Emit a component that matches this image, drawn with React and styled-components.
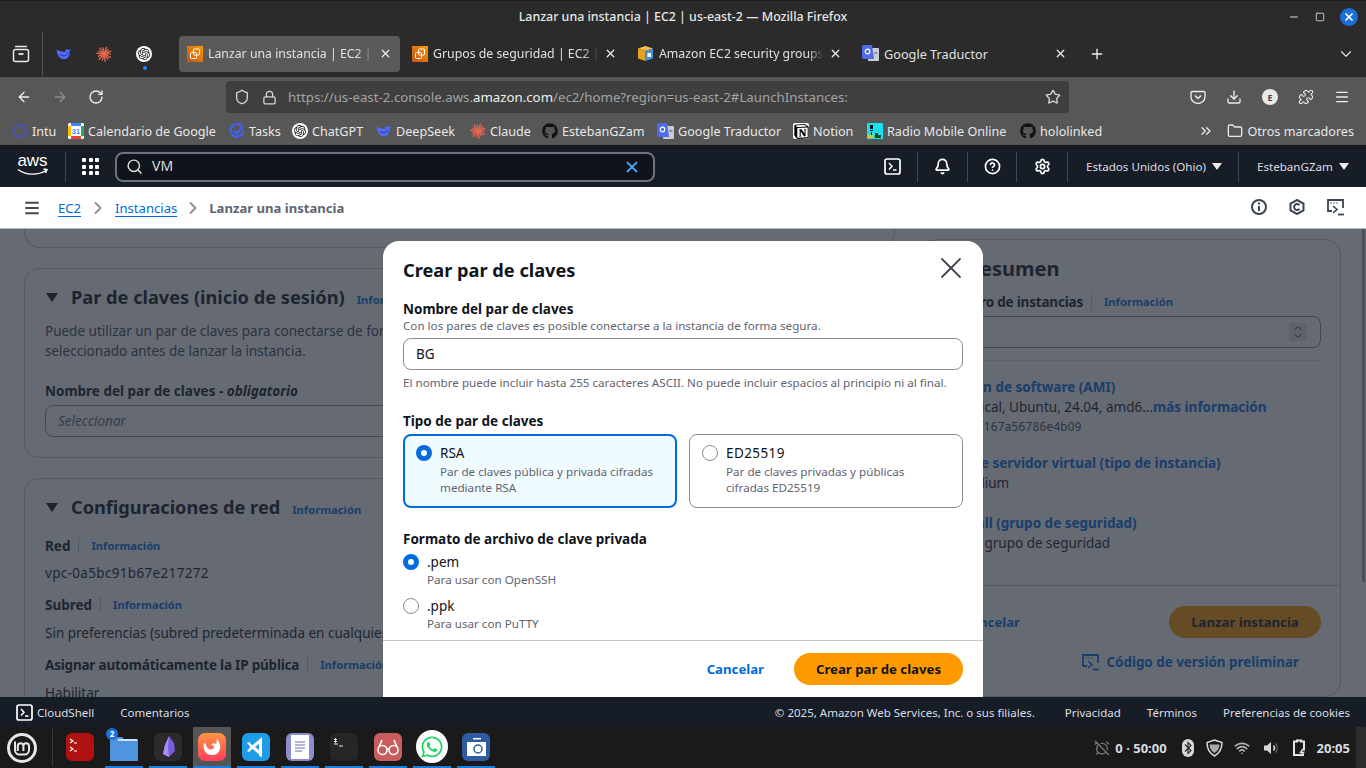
import React from "react";
import styled, { createGlobalStyle } from "styled-components";
import {
  ArrowLeft, ArrowRight, RotateCw, Shield, Lock, Star, Download, Puzzle, Menu, X, Plus,
  ChevronDown, ChevronRight, ChevronsRight, Bell, CircleHelp, Settings, Search, Folder,
  Minus, Square, Wifi, AlarmClockOff, ChevronUp,
} from "lucide-react";
import { SiOpenai, SiNotion } from "react-icons/si";
import { FaGithub, FaWhatsapp } from "react-icons/fa";

const chromeFont = `"Noto Sans", "Liberation Sans", sans-serif`;
const pageFont = `"Noto Sans", "Open Sans", sans-serif`;

const Global = createGlobalStyle`
  html, body { margin: 0; padding: 0; height: 100%; overflow: hidden; background: #1a1a1a; }
  * { box-sizing: border-box; }
`;

const Screen = styled.div`
  width: 1366px;
  height: 768px;
  display: flex;
  flex-direction: column;
  overflow: hidden;
  font-family: ${pageFont};
`;

/* ---------- window + firefox chrome ---------- */

const TitleBar = styled.div`
  height: 32px;
  flex: none;
  background: #2b2b2b;
  border-top: 1px solid #1f1f1f;
  color: #e6e6e6;
  font: 500 12.4px ${chromeFont};
  display: grid;
  grid-template-columns: 1fr auto 1fr;
  align-items: center;
  padding: 0 8px;
`;

const TitleText = styled.div`
  grid-column: 2;
`;

const WindowButtons = styled.div`
  grid-column: 3;
  display: flex;
  justify-content: flex-end;
  align-items: center;
  gap: 15px;
  color: #ddd;
`;

const CloseDot = styled.div`
  width: 18px;
  height: 18px;
  border-radius: 50%;
  background: #1a6fd8;
  color: #fff;
  display: flex;
  align-items: center;
  justify-content: center;
`;

const TabBar = styled.div`
  height: 45px;
  flex: none;
  background: #2b2b2b;
  padding-bottom: 2px;
  display: flex;
  align-items: center;
  color: #ddd;
`;

const ContainerSlot = styled.div`
  width: 43px;
  height: 44px;
  border-right: 1px solid #555;
  display: flex;
  align-items: center;
  justify-content: center;
`;

const PinnedTab = styled.div`
  width: 40px;
  display: flex;
  justify-content: center;
  position: relative;
`;

const PinnedDot = styled.span`
  position: absolute;
  bottom: -8px;
  left: 19px;
  width: 4px;
  height: 4px;
  border-radius: 50%;
  background: #2a7fff;
`;

const PinnedRow = styled.div`
  display: flex;
  margin-left: 1px;
  width: 135px;
`;

const Tab = styled.div`
  width: 221px;
  height: 36px;
  margin-right: 4px;
  padding: 0 8px;
  border-radius: 4px;
  background: ${(p) => (p.$active ? "#5a5a5a" : "transparent")};
  display: flex;
  align-items: center;
  gap: 5px;
  font: 12.7px ${chromeFont};
  color: #e0e0e0;
`;

const TabLabel = styled.div`
  flex: 1;
  min-width: 0;
  white-space: nowrap;
  overflow: hidden;
  font-size: ${(p) => (p.$fade ? "12.3px" : "12.7px")};
  -webkit-mask-image: ${(p) => (p.$fade ? "linear-gradient(90deg, #000 90%, transparent)" : "none")};
`;

const TabEnd = styled.div`
  margin-left: auto;
  padding-right: 11px;
  display: flex;
  align-items: center;
`;

const NavBar = styled.div`
  height: 38px;
  flex: none;
  background: #575757;
  padding-top: 2px;
  display: flex;
  align-items: center;
  color: #eee;
`;

const NavButtons = styled.div`
  width: 226px;
  padding-left: 16px;
  display: flex;
  gap: 20px;
`;

const UrlBar = styled.div`
  width: 843px;
  height: 32px;
  background: #3f3f3f;
  border-radius: 4px;
  display: flex;
  align-items: center;
  padding: 0 8px;
  color: #d5d5d5;
`;

const UrlText = styled.div`
  flex: 1;
  margin-left: 11px;
  font: 13.25px ${chromeFont};
  color: #a3a3a3;
  white-space: nowrap;
  overflow: hidden;
  b { font-weight: 400; color: #f0f0f0; }
`;

const NavRight = styled.div`
  flex: 1;
  display: flex;
  justify-content: space-between;
  align-items: center;
  padding: 0 16px 0 121px;
`;

const ProfileDot = styled.div`
  width: 16px;
  height: 16px;
  border-radius: 50%;
  background: #e8e8e8;
  color: #444;
  font: 700 9px ${chromeFont};
  display: flex;
  align-items: center;
  justify-content: center;
`;

const BookmarkBar = styled.div`
  height: 30px;
  flex: none;
  background: #575757;
  padding: 2px 0 0 12px;
  display: flex;
  align-items: center;
  font: 12.6px ${chromeFont};
  color: #e8e8e8;
`;

const Bookmark = styled.div`
  width: ${(p) => p.$w}px;
  flex: none;
  display: flex;
  align-items: center;
  gap: 4px;
  white-space: nowrap;
`;

const BookmarkEnd = styled.div`
  margin-left: auto;
  padding-right: 12px;
  display: flex;
  align-items: center;
  gap: 4px;
`;

/* ---------- aws console ---------- */

const AwsHeader = styled.div`
  height: 42px;
  flex: none;
  background: #161d26;
  border-top: 1px solid #0f141a;
  display: flex;
  align-items: center;
  color: #eee;
  font: 11.6px ${pageFont};
`;

const AwsLogo = styled.div`
  margin-left: 16px;
  padding-right: 16px;
  height: 30px;
  display: flex;
  flex-direction: column;
  align-items: center;
  border-right: 1px solid #424650;
  box-sizing: content-box;
  width: 33px;
  font: 17px/17px "Liberation Sans", sans-serif;
  color: #fff;
  svg { margin-top: -1px; }
`;

const AppsGrid = styled.div`
  margin-left: 16px;
  width: 17px;
  display: grid;
  grid-template-columns: repeat(3, 4px);
  gap: 2.5px;
  span { width: 4px; height: 4px; background: #fff; border-radius: 1px; }
`;

const SearchBox = styled.div`
  width: 540px;
  height: 30px;
  margin-left: 16px;
  background: #0f141a;
  border: 2px solid #6e737b;
  border-radius: 8px;
  display: flex;
  align-items: center;
  padding: 0 12px 0 9px;
  color: #ddd;
  font: 14px ${pageFont};
`;

const SearchValue = styled.div`
  flex: 1;
  margin: 0 0 2px 9px;
`;

const HeaderRight = styled.div`
  margin-left: auto;
  display: flex;
  align-items: center;
`;

const HeaderCell = styled.div`
  width: ${(p) => p.$w}px;
  height: 30px;
  border-right: ${(p) => (p.$last ? "none" : "1px solid #424650")};
  display: flex;
  align-items: center;
  justify-content: ${(p) => (p.$start ? "flex-start" : "center")};
  padding-left: ${(p) => (p.$start ? "18px" : "0")};
  gap: 6px;
  white-space: nowrap;
  color: #dedee3;
`;

const Caret = styled.span`
  width: 0;
  height: 0;
  border-left: 5px solid transparent;
  border-right: 5px solid transparent;
  border-top: 7px solid ${(p) => p.$color || "#eee"};
  flex: none;
`;

const Breadcrumbs = styled.div`
  height: 42px;
  flex: none;
  background: #fff;
  border-bottom: 1px solid #b4b4bb;
  display: flex;
  align-items: center;
  padding: 0 22px 0 23px;
  font: 13.1px ${pageFont};
  color: #8c8c94;
`;

const CrumbLink = styled.a`
  color: #006ce0;
  text-decoration: underline;
  text-underline-offset: 3px;
`;

const CrumbCurrent = styled.span`
  color: #5f6470;
  font-weight: 700;
`;

const CrumbChevron = styled(ChevronRight)`
  margin: 0 ${(p) => p.$gap}px;
`;

const CrumbActions = styled.div`
  margin-left: auto;
  display: flex;
  gap: 22px;
  color: #3b4450;
`;

const Content = styled.div`
  position: relative;
  height: 468px;
  flex: none;
  background: #fff;
  overflow: hidden;
`;

const Columns = styled.div`
  display: grid;
  grid-template-columns: 871px 420px;
  gap: 26px;
  padding-left: 24px;
  color: #0f141a;
`;

const LeftColumn = styled.div`
  display: flex;
  flex-direction: column;
  gap: 20px;
`;

const Card = styled.section`
  border: 1px solid #c6c6cd;
  border-radius: 16px;
  padding: 16px 20px ${(p) => p.$pb || 19}px;
`;

const StubCard = styled.div`
  height: 19px;
  border: 1px solid #c6c6cd;
  border-top: none;
  border-radius: 0 0 16px 16px;
`;

const CardHead = styled.div`
  display: flex;
  align-items: center;
  height: 24px;
  font: 700 18.2px/24px ${pageFont};
`;

const Triangle = styled.span`
  width: 0;
  height: 0;
  margin-left: 1px;
  margin-right: 13px;
  border-left: 6px solid transparent;
  border-right: 6px solid transparent;
  border-top: 9px solid #0f141a;
`;

const InfoLink = styled.span`
  font: 700 11.2px/20px ${pageFont};
  color: #006ce0;
  margin-left: ${(p) => p.$gap || 12}px;
`;

const HeadInfo = styled(InfoLink)`
  margin-top: 6px;
`;

const Body = styled.div`
  font: 13.5px/20px ${pageFont};
  margin-top: ${(p) => p.$mt || 0}px;
  white-space: nowrap;
  color: ${(p) => p.$color || "#0f141a"};
`;

const IdLine = styled(Body)`
  letter-spacing: 0.33px;
`;

const Label = styled.div`
  font: 700 13.5px/20px ${pageFont};
  margin-top: ${(p) => p.$mt || 0}px;
  white-space: nowrap;
  display: flex;
  align-items: center;
`;

const ModalLabel = styled(Label)`
  line-height: 22px;
  margin-bottom: -2px;
`;

const TightLabel = styled(Label)`
  letter-spacing: -0.2px;
`;

const InfoSplit = styled.span`
  border-left: 1px solid #c6c6cd;
  margin-left: 8px;
  padding-left: 11px;
  height: 16px;
  display: flex;
  align-items: center;
  letter-spacing: 0;
`;

const FieldBox = styled.div`
  height: 32px;
  margin-top: 4px;
  border: 1px solid #8c8c94;
  border-radius: 8px;
  padding: 0 12px;
  font: italic 13.5px/30px ${pageFont};
  color: #656871;
  display: flex;
  align-items: center;
  justify-content: flex-end;
`;

const SelectText = styled.span`
  margin-right: auto;
`;

const Spinner = styled.div`
  width: 18px;
  height: 18px;
  margin-right: 1px;
  background: #e3e3e8;
  color: #3d4450;
  display: flex;
  flex-direction: column;
  align-items: center;
  justify-content: center;
  svg { margin: -2px 0; }
`;

const SummaryCard = styled.aside`
  margin-top: 10px;
  height: 458px;
  border: 1px solid #c6c6cd;
  border-radius: 16px;
  display: flex;
  flex-direction: column;
`;

const SummaryScroll = styled.div`
  height: 341px;
  padding: 17px 19px 0 18px;
  overflow: hidden;
`;

const SummaryHead = styled.div`
  font: 700 20px/24px ${pageFont};
  padding-left: 27px;
`;

const Divider = styled.div`
  height: 1px;
  background: #e3e3e8;
  margin-top: 12px;
`;

const SummaryLink = styled.div`
  font: 700 13.5px/20px ${pageFont};
  color: #006ce0;
  margin-top: ${(p) => p.$mt || 0}px;
  white-space: nowrap;
`;

const MoreLink = styled.span`
  font-weight: 700;
  color: #006ce0;
`;

const SmallGrey = styled.div`
  font: 11.7px/16px ${pageFont};
  letter-spacing: 0.3px;
  margin-top: 1px;
  color: #424650;
`;

const SummaryFoot = styled.div`
  margin-top: 4px;
  border-top: 1px solid #c6c6cd;
  padding: 20px 19px 0;
`;

const FootActions = styled.div`
  display: flex;
  align-items: center;
  justify-content: flex-end;
  gap: 149px;
`;

const TextLink = styled.span`
  font: 700 13.2px/20px ${pageFont};
  color: #006ce0;
`;

const PrimaryButton = styled.button`
  height: 32px;
  width: ${(p) => p.$w}px;
  border: none;
  border-radius: 16px;
  background: #ff9900;
  color: #0f141a;
  font: 700 13.2px ${pageFont};
  padding: 0;
`;

const PreviewCode = styled.div`
  margin-top: 14px;
  padding-right: 22px;
  display: flex;
  justify-content: flex-end;
  align-items: center;
  gap: 7px;
  color: #006ce0;
  font: 700 13.4px/20px ${pageFont};
`;

const ScrollThumb = styled.div`
  position: absolute;
  top: 0;
  right: 1px;
  width: 3px;
  height: 353px;
  background: #a8a8ac;
  z-index: 2;
`;

/* ---------- modal ---------- */

const Overlay = styled.div`
  position: absolute;
  inset: 0;
  background: rgba(35, 43, 55, 0.7);
  display: flex;
  justify-content: center;
  padding-top: 12px;
  z-index: 3;
`;

const Modal = styled.div`
  width: 600px;
  height: 490px;
  flex: none;
  background: #fff;
  border-radius: 16px;
  color: #0f141a;
`;

const ModalScroll = styled.div`
  height: 400px;
  padding: 15px 20px 0;
  overflow: hidden;
  border-bottom: 1px solid #c6c6cd;
`;

const ModalHead = styled.div`
  height: 28px;
  display: flex;
  justify-content: space-between;
  align-items: center;
  font: 700 18.2px/28px ${pageFont};
  color: #0f141a;
  svg { margin: -8px -6px -4px 0; flex: none; }
`;

const Hint = styled.div`
  font: 11.65px/16px ${pageFont};
  color: #5f6470;
  white-space: nowrap;
  margin-top: ${(p) => p.$mt || 0}px;
`;

const TextInput = styled.div`
  height: 32px;
  margin-top: 4px;
  border: 1px solid #8c8c94;
  border-radius: 8px;
  padding: 0 12px;
  font: 13.5px/30px ${pageFont};
  color: #0f141a;
`;

const TileRow = styled.div`
  display: grid;
  grid-template-columns: 1fr 1fr;
  gap: 12px;
  margin-top: 4px;
`;

const Tile = styled.div`
  height: 74px;
  border-radius: 8px;
  border: ${(p) => (p.$on ? "2px solid #006ce0" : "1px solid #8c8c94")};
  background: ${(p) => (p.$on ? "#f0fbff" : "#fff")};
  padding: ${(p) => (p.$on ? "7px 11px" : "8px 12px")};
`;

const RadioRow = styled.div`
  display: flex;
  gap: 8px;
  margin-top: ${(p) => p.$mt || 0}px;
`;

const RadioDot = styled.span`
  width: 16px;
  height: 16px;
  margin-top: 2px;
  flex: none;
  border-radius: 50%;
  background: #fff;
  border: ${(p) => (p.$on ? "5px solid #006ce0" : "1px solid #8c8c94")};
`;

const RadioTitle = styled.div`
  font: 13.5px/20px ${pageFont};
  letter-spacing: ${(p) => (p.$spaced ? "0.4px" : "0")};
`;

const ModalFoot = styled.div`
  display: flex;
  justify-content: flex-end;
  align-items: center;
  gap: 30px;
  padding: 12px 20px;
`;

/* ---------- footers ---------- */

const ConsoleFoot = styled.div`
  height: 30px;
  flex: none;
  background: #161d26;
  color: #dedee3;
  font: 11.5px ${pageFont};
  display: flex;
  align-items: center;
  padding: 1px 16px 0;
`;

const FootItem = styled.span`
  display: flex;
  align-items: center;
  gap: 4px;
  margin-left: ${(p) => (p.$auto ? "auto" : `${p.$ml || 0}px`)};
  white-space: nowrap;
`;

const Taskbar = styled.div`
  height: 41px;
  flex: none;
  background: #1a1a1a;
  display: flex;
  align-items: stretch;
  color: #ddd;
`;

const MintSlot = styled.div`
  width: 52px;
  padding-right: 8px;
  display: flex;
  align-items: center;
  justify-content: center;
`;

const MintSplit = styled.div`
  width: 1px;
  background: #3a3a3a;
  margin: 2px 8px 2px 0;
`;

const Launchers = styled.div`
  display: flex;
  gap: 6px;
`;

const Launcher = styled.div`
  position: relative;
  width: 38px;
  display: flex;
  align-items: center;
  justify-content: center;
  background: ${(p) => (p.$active ? "#555" : "transparent")};
  border-bottom: 2px solid ${(p) => (p.$open ? "#1a7ee0" : "transparent")};
`;

const Badge = styled.span`
  position: absolute;
  top: 1px;
  left: 1px;
  width: 12px;
  height: 12px;
  border-radius: 50%;
  background: #1a6fd8;
  color: #fff;
  font: 700 8px/12px ${chromeFont};
  text-align: center;
`;

const Tray = styled.div`
  margin-left: auto;
  display: flex;
  align-items: center;
  font: 700 13px ${chromeFont};
  color: #d8dde4;
`;

const TrayItem = styled.div`
  display: flex;
  align-items: center;
  gap: 5px;
  margin-left: ${(p) => p.$ml || 0}px;
`;

const DesktopEdge = styled.div`
  width: 10px;
  height: 41px;
  margin-left: 6px;
  background: #2c2c2c;
`;

const GptBadge = styled.span`
  width: ${(p) => p.$size}px;
  height: ${(p) => p.$size}px;
  border-radius: 50%;
  background: #fff;
  color: #111;
  flex: none;
  display: flex;
  align-items: center;
  justify-content: center;
`;

const NotionBadge = styled.span`
  width: 16px;
  height: 16px;
  background: #fff;
  border-radius: 2px;
  color: #000;
  flex: none;
  display: flex;
  align-items: center;
  justify-content: center;
`;

const WhatsappBadge = styled.span`
  width: 32px;
  height: 33px;
  border-radius: 50%;
  background: #fff;
  color: #25d366;
  display: flex;
  align-items: center;
  justify-content: center;
`;

/* ---------- drawn icons ---------- */

const ContainerIcon = () => (
  <svg width="18" height="18" viewBox="0 0 18 18" fill="none" stroke="#e8e8e8" strokeWidth="1.500">
    <path d="M3 1.500h12M1.500 6.500a2 2 0 0 1 2-2h11a2 2 0 0 1 2 2v8a2 2 0 0 1-2 2h-11a2 2 0 0 1-2-2Z" />
    <path d="M6.500 9h5" strokeWidth="1.800" />
  </svg>
);

const Ec2Icon = () => (
  <svg width="16" height="16" viewBox="0 0 16 16">
    <defs>
      <linearGradient id="ec2" x1="0" y1="1" x2="1" y2="0">
        <stop offset="0" stopColor="#c8511b" />
        <stop offset="1" stopColor="#ff9900" />
      </linearGradient>
    </defs>
    <rect width="16" height="16" fill="url(#ec2)" />
    <rect x="6.500" y="3" width="6" height="6" rx="1" fill="none" stroke="#fff" />
    <rect x="3.500" y="6.500" width="6" height="6" rx="1" fill="none" stroke="#fff" />
  </svg>
);

const BoxIcon = () => (
  <svg width="17" height="17" viewBox="0 0 17 17">
    <path d="M8.500 1 16 3.500 8.500 6 1 3.500Z" fill="#f7c04a" />
    <path d="M1 3.500 8.500 6v10L1 13.500Z" fill="#e8a021" />
    <path d="M16 3.500 8.500 6v10l7.500-2.500Z" fill="#4a90d9" />
    <path d="M10.500 8h3.500v4h-3.500z" fill="#fff" />
  </svg>
);

const TranslateIcon = () => (
  <svg width="17" height="17" viewBox="0 0 17 17">
    <rect x="6" y="3" width="11" height="13" rx="1" fill="#c9ccd6" />
    <path d="M1.500 0H10l2 14H1.500A1.500 1.500 0 0 1 0 12.500V1.500A1.500 1.500 0 0 1 1.500 0Z" fill="#4f6be8" />
    <circle cx="5.500" cy="6.500" r="2.300" fill="none" stroke="#fff" strokeWidth="1.200" />
    <path d="M12 8h3.500M13.700 7v1.500" stroke="#6a7080" strokeWidth="1" />
  </svg>
);

const WhaleIcon = () => (
  <svg width="16" height="16" viewBox="0 0 16 16">
    <path
      d="M.5 4.500c.6 3.200 1.800 6.300 4.200 7.800 2.500 1.500 5.700 1 7.200-.8.700-.9 1-1.700 1.100-2.700.6-.1 1.200-.4 1.700-.9-.7.1-1.300 0-1.500-.4-.2-1 .2-2 1-2.800.4-.5.700-1 .8-1.700-.7.500-1.500.9-2.400 1-.8-.8-2-.9-2.800-.2-.6.5-.9 1.300-.7 2.100-2 .1-4.500-.6-8.600-1.900Z"
      fill="#4d6bfe"
    />
    <path d="M4 8.500c1.800 1.300 3.700 1.600 5.800.8 1.100-.5 1.700-1.400 1.900-2.300" fill="none" stroke="#2b2b2b" strokeWidth=".7" />
  </svg>
);

const ClaudeIcon = () => {
  const rays = [0, 27, 52, 80, 105, 133, 158, 185, 208, 235, 262, 290, 315, 338];
  return (
    <svg width="16" height="16" viewBox="-8 -8 16 16">
      <circle r="2.600" fill="#e0664f" />
      {rays.map((a, i) => (
        <line
          key={a}
          x1="0"
          y1="0"
          x2={(i % 2 ? 7.8 : 6.6) * Math.cos((a * Math.PI) / 180)}
          y2={(i % 2 ? 7.8 : 6.6) * Math.sin((a * Math.PI) / 180)}
          stroke="#e0664f"
          strokeWidth="1.400"
        />
      ))}
    </svg>
  );
};

const GptIcon = ({ size = 16 }) => (
  <GptBadge $size={size}><SiOpenai size={size - 4} /></GptBadge>
);

const IntuIcon = () => (
  <svg width="16" height="16" viewBox="0 0 16 16">
    <circle cx="8" cy="8" r="6.200" fill="none" stroke="#4a55c8" strokeWidth="3" strokeDasharray="1 .8" />
  </svg>
);

const CalendarIcon = () => (
  <svg width="16" height="16" viewBox="0 0 16 16">
    <rect width="16" height="16" rx="1.500" fill="#fff" />
    <path d="M0 3h3v10H0z" fill="#fbbc04" />
    <path d="M3 0h10v3H3z" fill="#4285f4" />
    <path d="M13 3h3v10h-3z" fill="#34a853" />
    <path d="M3 13h10v3H3z" fill="#ea4335" />
    <text x="8" y="11" textAnchor="middle" fontSize="7.500" fontWeight="700" fontFamily="Liberation Sans" fill="#4285f4">31</text>
  </svg>
);

const TasksIcon = () => (
  <svg width="16" height="16" viewBox="0 0 16 16" fill="none">
    <path d="M13 3a6.500 6.500 0 1 0 1.500 5" stroke="#3f63e8" strokeWidth="2.400" />
    <path d="m5 8 2.500 2.500L14 3.500" stroke="#3f63e8" strokeWidth="2.400" />
  </svg>
);

const RadioIcon = () => (
  <svg width="16" height="16" viewBox="0 0 16 16">
    <rect width="16" height="16" fill="#19e0ee" />
    <path d="M3 2h3v4H3zM3 7h3v1H3zM4 9h1v3H4z" fill="#101010" />
    <path d="M1 12h5v3H1z" fill="#d6c91a" />
    <path d="M8 10h3v2h3v3H8z" fill="#134d1a" />
  </svg>
);

const NotionIcon = () => (
  <NotionBadge><SiNotion size={15} /></NotionBadge>
);

const PocketIcon = () => (
  <svg width="16" height="16" viewBox="0 0 16 16" fill="none" stroke="#eee" strokeWidth="1.300">
    <path d="M2 2.500h12a1 1 0 0 1 1 1V8a7 6.500 0 0 1-14 0V3.500a1 1 0 0 1 1-1Z" />
    <path d="m5 6.500 3 3 3-3" strokeWidth="1.500" />
  </svg>
);

const ShellIcon = ({ color = "#fff" }) => (
  <svg width="17" height="17" viewBox="0 0 17 17" fill="none" stroke={color} strokeWidth="1.700">
    <rect x="1" y="1" width="15" height="15" rx="2" />
    <path d="m5 5 3 3.200-3 3.200M9 12h3.500" strokeWidth="1.500" />
  </svg>
);

const RoundInfo = () => (
  <svg width="16" height="16" viewBox="0 0 16 16" fill="none" stroke="currentColor" strokeWidth="2">
    <circle cx="8" cy="8" r="7" />
    <path d="M8 7v5M8 3.500v2" />
  </svg>
);

const HexIcon = () => (
  <svg width="16" height="16" viewBox="0 0 16 16" fill="none" stroke="currentColor" strokeWidth="2">
    <path d="M8 1 14.500 4.500v7L8 15l-6.500-3.500v-7Z" />
    <path d="M10.500 6.200a3 3 0 1 0 0 3.600" />
  </svg>
);

const CodeScreen = ({ size = 17 }) => (
  <svg width={size} height={size} viewBox="0 0 17 17" fill="none" stroke="currentColor" strokeWidth="1.800">
    <path d="M5 12H1V1h15v8" />
    <path d="m6 7 4 3.500L6 14" strokeWidth="1.600" />
    <path d="M11 15.500h6" strokeWidth="1.800" />
    <path d="M3.500 4h1M6.500 4h1M9.500 4h1" strokeWidth="1.600" />
  </svg>
);

const MintLogo = () => (
  <svg width="32" height="32" viewBox="0 0 32 32" fill="none" stroke="#e6e6e6">
    <circle cx="16" cy="16" r="13.500" strokeWidth="3" />
    <path d="M9 9.500V18a4.500 4.500 0 0 0 4.500 4.500h5A4.500 4.500 0 0 0 23 18v-4a2.800 2.800 0 0 0-5.600 0v5M17.400 14a2.800 2.800 0 0 0-5.600 0v5" strokeWidth="2" />
  </svg>
);

const AppTile = ({ bg, children, radius = 6 }) => (
  <svg width="30" height="32" viewBox="0 0 30 32">
    <rect x="1" y="2" width="28" height="28" rx={radius} fill={bg} />
    {children}
  </svg>
);

const RedTerm = () => (
  <AppTile bg="#b01212">
    <path d="M5 8l3 2-3 2M9 12h3M5 16l3 2-3 2M9 20h3" stroke="#fff" strokeWidth="1.200" fill="none" />
  </AppTile>
);

const FilesIcon = () => (
  <svg width="30" height="32" viewBox="0 0 30 32">
    <path d="M1 6h12l2 2h14v22H1Z" fill="#4f94e0" />
    <path d="M9 8h19v2H9z" fill="#cfe2f7" />
  </svg>
);

const ObsidianIcon = () => (
  <AppTile bg="#2b2b2b">
    <path d="M16 5l5 7 1 8-6 6-6-3 2-9Z" fill="#7a5ce0" />
    <path d="M16 5l-1 11 1 10-6-3 2-9Z" fill="#a98cf2" />
  </AppTile>
);

const FirefoxDevIcon = () => (
  <svg width="30" height="32" viewBox="0 0 30 32">
    <defs>
      <linearGradient id="ff" x1="0" y1="0" x2="0" y2="1">
        <stop offset="0" stopColor="#ff9640" />
        <stop offset="1" stopColor="#ff3d5c" />
      </linearGradient>
    </defs>
    <rect x="1" y="2" width="28" height="28" rx="7" fill="url(#ff)" />
    <path d="M7 12c-2 7 3 13 9 12 5 0 8-5 7-10-.5-3-2-5-4-6 1 2 1 4 0 5-1-1-4-1-5 1 1 0 3 0 3 2s-3 3-5 2c-2-1-3-3-3-5 0-.5-1 0-2-1Z" fill="#fff" />
  </svg>
);

const VscodeIcon = () => (
  <AppTile bg="#1f9ce8">
    <path d="M21 6v20l-3-1V9Z" fill="#fff" />
    <path d="M19 8 9 16l10 8v-4l-5-4 5-4Z" fill="#fff" />
    <path d="m6 12 2-1 5 5-5 5-2-1 3.500-4Z" fill="#fff" />
  </AppTile>
);

const NotesIcon = () => (
  <AppTile bg="#8c8ccc">
    <rect x="6" y="4" width="18" height="24" fill="#fff" />
    <path d="M10 11h10M10 14h10M10 17h10M10 20h7" stroke="#6a6ab0" strokeWidth="1" />
  </AppTile>
);

const TermIcon = () => (
  <AppTile bg="#262626">
    <path d="M5 13h4M10 15h4" stroke="#eee" strokeWidth="1.200" />
    <path d="M6.500 7v5M5 8.500h3M5 10.500h3" stroke="#eee" strokeWidth=".900" />
  </AppTile>
);

const GlassesIcon = () => (
  <AppTile bg="#c95c5c">
    <g fill="none" stroke="#fff" strokeWidth="1.600">
      <circle cx="9.500" cy="19" r="4.500" />
      <circle cx="20.500" cy="19" r="4.500" />
      <path d="M14 18h2M6 16l3-7M24 16l-3-7" />
    </g>
  </AppTile>
);

const WhatsappIcon = () => (
  <WhatsappBadge><FaWhatsapp size={24} /></WhatsappBadge>
);

const CameraIcon = () => (
  <AppTile bg="#2f5c9e">
    <rect x="6" y="11" width="19" height="14" fill="#fff" />
    <path d="M12 7h8v1.500h-8z" fill="#fff" />
    <circle cx="17" cy="18" r="4" fill="#fff" stroke="#2f5c9e" strokeWidth="1.500" />
  </AppTile>
);

const BluetoothBadge = () => (
  <svg width="12" height="18" viewBox="0 0 12 18">
    <rect width="12" height="18" rx="6" fill="#d8d8d8" />
    <path d="M3 5.500 9 11.500 6 14.500V3.500L9 6.500 3 12.500" fill="none" stroke="#222" strokeWidth="1.100" />
  </svg>
);

const TrayShield = () => (
  <svg width="17" height="18" viewBox="0 0 17 18" fill="none" stroke="#d8d8d8">
    <path d="M8.500 1 16 3.500c0 6-2 10.500-7.500 13.500C3 14 1 9.500 1 3.500Z" strokeWidth="1.500" />
    <path d="M3.500 5.500h10c0 3.500-1.500 6.500-5 8.500-3.500-2-5-5-5-8.500Z" fill="#d8d8d8" stroke="none" opacity=".75" />
  </svg>
);

const SpeakerIcon = () => (
  <svg width="16" height="16" viewBox="0 0 16 16" fill="none">
    <path d="M1 5.500h3L8 2v12l-4-3.500H1Z" fill="#d8d8d8" />
    <path d="M10.500 5.500a4 4 0 0 1 0 5" stroke="#d8d8d8" strokeWidth="1.500" />
    <path d="M12.500 3.500a7 7 0 0 1 0 9" stroke="#666" strokeWidth="1.300" />
  </svg>
);

const BatteryIcon = () => (
  <svg width="14" height="18" viewBox="0 0 14 18" fill="none" stroke="#e4e4e4" strokeWidth="2">
    <path d="M5 2.500V1.500h4v1h3v9M12 16H2V2.500h4" />
    <path d="m11 10-2.500 3.500h3L9 17" strokeWidth="1.400" />
  </svg>
);

/* ---------- data ---------- */

const tabs = [
  { icon: <Ec2Icon />, label: "Lanzar una instancia | EC2 | us-east-2", active: true, fade: true },
  { icon: <Ec2Icon />, label: "Grupos de seguridad | EC2 | us-east-2", fade: true },
  { icon: <BoxIcon />, label: "Amazon EC2 security groups - Amazon", fade: true },
  { icon: <TranslateIcon />, label: "Google Traductor" },
];

const bookmarks = [
  { w: 56, icon: <IntuIcon />, label: "Intu" },
  { w: 161, icon: <CalendarIcon />, label: "Calendario de Google" },
  { w: 63, icon: <TasksIcon />, label: "Tasks" },
  { w: 84, icon: <GptIcon />, label: "ChatGPT" },
  { w: 94, icon: <WhaleIcon />, label: "DeepSeek" },
  { w: 72, icon: <ClaudeIcon />, label: "Claude" },
  { w: 115, icon: <FaGithub size={16} color="#111" />, label: "EstebanGZam" },
  { w: 136, icon: <TranslateIcon />, label: "Google Traductor" },
  { w: 74, icon: <NotionIcon />, label: "Notion" },
  { w: 153, icon: <RadioIcon />, label: "Radio Mobile Online" },
  { w: 110, icon: <FaGithub size={16} color="#111" />, label: "hololinked" },
];

const launchers = [
  { icon: <RedTerm /> },
  { icon: <FilesIcon />, open: true, badge: "2" },
  { icon: <ObsidianIcon />, open: true },
  { icon: <FirefoxDevIcon />, open: true, active: true },
  { icon: <VscodeIcon />, open: true },
  { icon: <NotesIcon />, open: true },
  { icon: <TermIcon />, open: true },
  { icon: <GlassesIcon />, open: true },
  { icon: <WhatsappIcon />, open: true },
  { icon: <CameraIcon />, open: true },
];

const summary = [
  { link: "Imagen de software (AMI)", mt: 16, text: <>Canonical, Ubuntu, 24.04, amd6...<MoreLink>más información</MoreLink></>, id: "ami-04f167a56786e4b09" },
  { link: "Tipo de servidor virtual (tipo de instancia)", mt: 19, text: "t2.medium" },
  { link: "Firewall (grupo de seguridad)", mt: 20, text: "Nuevo grupo de seguridad" },
  { link: "Almacenamiento (volúmenes)", mt: 24 },
];

const Informacion = () => (
  <InfoSplit><InfoLink $gap={1}>Información</InfoLink></InfoSplit>
);

export default function App() {
  return (
    <Screen>
      <Global />
      <TitleBar>
        <TitleText>Lanzar una instancia | EC2 | us-east-2 — Mozilla Firefox</TitleText>
        <WindowButtons>
          <Minus size={12} />
          <Square size={10} />
          <CloseDot><X size={12} strokeWidth={3.5} /></CloseDot>
        </WindowButtons>
      </TitleBar>

      <TabBar>
        <ContainerSlot><ContainerIcon /></ContainerSlot>
        <PinnedRow>
          <PinnedTab><WhaleIcon /></PinnedTab>
          <PinnedTab><ClaudeIcon /></PinnedTab>
          <PinnedTab><GptIcon /><PinnedDot /></PinnedTab>
        </PinnedRow>
        {tabs.map((t) => (
          <Tab key={t.label} $active={t.active}>
            {t.icon}
            <TabLabel $fade={t.fade}>{t.label}</TabLabel>
            <X size={13} strokeWidth={2.2} color="#eee" />
          </Tab>
        ))}
        <Plus size={16} color="#eee" style={{ marginLeft: 10 }} />
        <TabEnd><ChevronDown size={18} strokeWidth={1.6} /></TabEnd>
      </TabBar>

      <NavBar>
        <NavButtons>
          <ArrowLeft size={16} />
          <ArrowRight size={16} color="#8f8f8f" />
          <RotateCw size={16} />
        </NavButtons>
        <UrlBar>
          <Shield size={16} />
          <Lock size={15} style={{ marginLeft: 12 }} />
          <UrlText>https://us-east-2.console.aws.<b>amazon.com</b>/ec2/home?region=us-east-2#LaunchInstances:</UrlText>
          <Star size={16} />
        </UrlBar>
        <NavRight>
          <PocketIcon />
          <Download size={16} />
          <ProfileDot>E</ProfileDot>
          <Puzzle size={16} strokeWidth={1.6} />
          <Menu size={16} />
        </NavRight>
      </NavBar>

      <BookmarkBar>
        {bookmarks.map((b) => (
          <Bookmark key={b.label} $w={b.w}>{b.icon}{b.label}</Bookmark>
        ))}
        <BookmarkEnd>
          <ChevronsRight size={16} style={{ marginRight: 9 }} />
          <Folder size={16} />
          Otros marcadores
        </BookmarkEnd>
      </BookmarkBar>

      <AwsHeader>
        <AwsLogo>
          aws
          <svg width="32" height="9" viewBox="0 0 32 9" fill="none" stroke="#fff" strokeWidth="1.400">
            <path d="M1 1.500c8 6 20 6 28 1M26.500 1l3.500.5-1.500 3.500" />
          </svg>
        </AwsLogo>
        <AppsGrid>{Array.from({ length: 9 }, (_, i) => <span key={i} />)}</AppsGrid>
        <SearchBox>
          <Search size={17} strokeWidth={2.1} />
          <SearchValue>VM</SearchValue>
          <X size={18} strokeWidth={2.4} color="#42a5f5" />
        </SearchBox>
        <HeaderRight>
          <HeaderCell $w={50}><ShellIcon /></HeaderCell>
          <HeaderCell $w={50}><Bell size={17} strokeWidth={2.4} color="#fff" /></HeaderCell>
          <HeaderCell $w={49}><CircleHelp size={17} strokeWidth={2.4} color="#fff" /></HeaderCell>
          <HeaderCell $w={51}><Settings size={17} strokeWidth={2.4} color="#fff" /></HeaderCell>
          <HeaderCell $w={171} $start>Estados Unidos (Ohio) <Caret /></HeaderCell>
          <HeaderCell $w={127} $start $last>EstebanGZam <Caret /></HeaderCell>
        </HeaderRight>
      </AwsHeader>

      <Breadcrumbs>
        <Menu size={18} strokeWidth={2.4} color="#424650" style={{ marginRight: 17 }} />
        <CrumbLink>EC2</CrumbLink>
        <CrumbChevron size={20} strokeWidth={2.2} $gap={7} />
        <CrumbLink>Instancias</CrumbLink>
        <CrumbChevron size={20} strokeWidth={2.2} $gap={6} />
        <CrumbCurrent>Lanzar una instancia</CrumbCurrent>
        <CrumbActions>
          <RoundInfo />
          <HexIcon />
          <CodeScreen />
        </CrumbActions>
      </Breadcrumbs>

      <Content>
        <Columns>
          <LeftColumn>
            <StubCard />
            <Card $pb={20}>
              <CardHead><Triangle />Par de claves (inicio de sesión)<HeadInfo>Información</HeadInfo></CardHead>
              <Body $mt={12} $color="#424650">Puede utilizar un par de claves para conectarse de forma segura a su instancia. Asegúrese de tener acceso al par de claves</Body>
              <Body $color="#424650">seleccionado antes de lanzar la instancia.</Body>
              <Label $mt={20}>Nombre del par de claves -&nbsp;<i>obligatorio</i></Label>
              <FieldBox><SelectText>Seleccionar</SelectText></FieldBox>
            </Card>
            <Card>
              <CardHead><Triangle />Configuraciones de red<HeadInfo>Información</HeadInfo></CardHead>
              <Label $mt={17}>Red<Informacion /></Label>
              <IdLine $mt={7}>vpc-0a5bc91b67e217272</IdLine>
              <Label $mt={12}>Subred<Informacion /></Label>
              <Body $mt={8}>Sin preferencias (subred predeterminada en cualquier zona de disponibilidad)</Body>
              <TightLabel $mt={12}>Asignar automáticamente la IP pública<Informacion /></TightLabel>
              <Body $mt={8}>Habilitar</Body>
            </Card>
          </LeftColumn>

          <SummaryCard>
            <SummaryScroll>
              <SummaryHead>Resumen</SummaryHead>
              <TightLabel $mt={11}>Número de instancias<Informacion /></TightLabel>
              <FieldBox>
                <Spinner><ChevronUp size={12} /><ChevronDown size={12} /></Spinner>
              </FieldBox>
              <Divider />
              {summary.map((s) => (
                <React.Fragment key={s.link}>
                  <SummaryLink $mt={s.mt}>{s.link}</SummaryLink>
                  {s.text && <Body>{s.text}</Body>}
                  {s.id && <SmallGrey>{s.id}</SmallGrey>}
                </React.Fragment>
              ))}
            </SummaryScroll>
            <SummaryFoot>
              <FootActions>
                <TextLink>Cancelar</TextLink>
                <PrimaryButton $w={152}>Lanzar instancia</PrimaryButton>
              </FootActions>
              <PreviewCode><CodeScreen />Código de versión preliminar</PreviewCode>
            </SummaryFoot>
          </SummaryCard>
        </Columns>
        <ScrollThumb />

        <Overlay>
          <Modal>
            <ModalScroll>
              <ModalHead>Crear par de claves<X size={36} strokeWidth={1.2} color="#424650" /></ModalHead>
              <ModalLabel $mt={14}>Nombre del par de claves</ModalLabel>
              <Hint>Con los pares de claves es posible conectarse a la instancia de forma segura.</Hint>
              <TextInput>BG</TextInput>
              <Hint $mt={5}>El nombre puede incluir hasta 255 caracteres ASCII. No puede incluir espacios al principio ni al final.</Hint>
              <ModalLabel $mt={19}>Tipo de par de claves</ModalLabel>
              <TileRow>
                <Tile $on>
                  <RadioRow>
                    <RadioDot $on />
                    <div>
                      <RadioTitle>RSA</RadioTitle>
                      <Hint $mt={1}>Par de claves pública y privada cifradas</Hint>
                      <Hint>mediante RSA</Hint>
                    </div>
                  </RadioRow>
                </Tile>
                <Tile>
                  <RadioRow>
                    <RadioDot />
                    <div>
                      <RadioTitle $spaced>ED25519</RadioTitle>
                      <Hint $mt={1}>Par de claves privadas y públicas</Hint>
                      <Hint>cifradas ED25519</Hint>
                    </div>
                  </RadioRow>
                </Tile>
              </TileRow>
              <ModalLabel $mt={20}>Formato de archivo de clave privada</ModalLabel>
              <RadioRow $mt={4}>
                <RadioDot $on />
                <div>
                  <RadioTitle>.pem</RadioTitle>
                  <Hint>Para usar con OpenSSH</Hint>
                </div>
              </RadioRow>
              <RadioRow $mt={8}>
                <RadioDot />
                <div>
                  <RadioTitle>.ppk</RadioTitle>
                  <Hint>Para usar con PuTTY</Hint>
                </div>
              </RadioRow>
            </ModalScroll>
            <ModalFoot>
              <TextLink>Cancelar</TextLink>
              <PrimaryButton $w={169}>Crear par de claves</PrimaryButton>
            </ModalFoot>
          </Modal>
        </Overlay>
      </Content>

      <ConsoleFoot>
        <FootItem><ShellIcon /> CloudShell</FootItem>
        <FootItem $ml={26}>Comentarios</FootItem>
        <FootItem $auto>© 2025, Amazon Web Services, Inc. o sus filiales.</FootItem>
        <FootItem $ml={30}>Privacidad</FootItem>
        <FootItem $ml={26}>Términos</FootItem>
        <FootItem $ml={26}>Preferencias de cookies</FootItem>
      </ConsoleFoot>

      <Taskbar>
        <MintSlot><MintLogo /></MintSlot>
        <MintSplit />
        <Launchers>
          {launchers.map((l, i) => (
            <Launcher key={i} $open={l.open} $active={l.active}>
              {l.badge && <Badge>{l.badge}</Badge>}
              {l.icon}
            </Launcher>
          ))}
        </Launchers>
        <Tray>
          <TrayItem><AlarmClockOff size={16} color="#777" />0 · 50:00</TrayItem>
          <TrayItem $ml={15}><BluetoothBadge /></TrayItem>
          <TrayItem $ml={12}><TrayShield /></TrayItem>
          <TrayItem $ml={11}><Wifi size={16} strokeWidth={2.4} color="#b5b5b5" /></TrayItem>
          <TrayItem $ml={13}><SpeakerIcon /></TrayItem>
          <TrayItem $ml={13}><BatteryIcon /></TrayItem>
          <TrayItem $ml={11}>20:05</TrayItem>
          <DesktopEdge />
        </Tray>
      </Taskbar>
    </Screen>
  );
}
